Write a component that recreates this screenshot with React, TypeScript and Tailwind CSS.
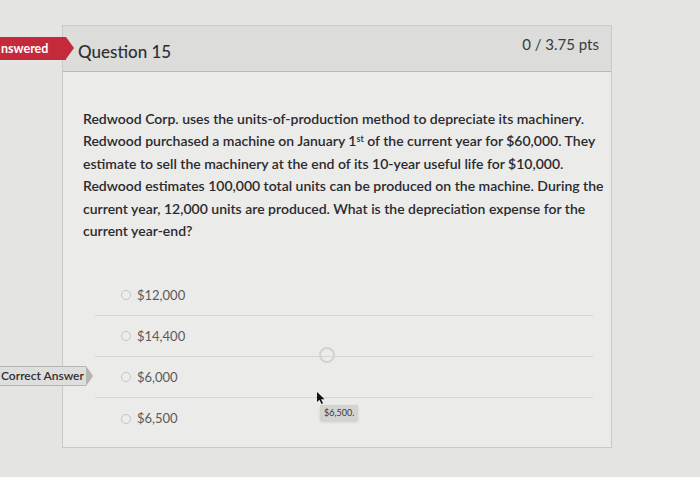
import React from "react";

const answers = ["$12,000", "$14,400", "$6,000", "$6,500"];

function Radio() {
  return (
    <span className="inline-block w-[10px] h-[10px] rounded-full border border-[#c4c4c2] bg-[#ededeb]" />
  );
}

export default function App() {
  return (
    <div
      className="relative w-[700px] h-[477px] overflow-hidden bg-[#e4e4e2]"
      style={{ fontFamily: "Lato, 'Open Sans', sans-serif" }}
    >
      <div className="pt-[25px] pl-[62px]">
        <div className="w-[550px] h-[423px] border border-[#c9c9c7] bg-[#ebebe9]">
          <div className="h-[46px] flex justify-between bg-[#dcdcda] border-b border-[#b9b9b7] pl-[15px] pr-[12px]">
            <div className="pt-[14px] text-[17px] leading-[24px] text-[#2f2f33] font-medium">
              Question 15
            </div>
            <div className="pt-[7px] text-[15px] leading-[22px] text-[#3a3a3e]">
              0 / 3.75 pts
            </div>
          </div>

          <div className="pl-[20px] pt-[36px] text-[14px] leading-[22.4px] font-semibold text-[#2a2a2e] whitespace-nowrap">
            Redwood Corp. uses the units-of-production method to depreciate its machinery.
            <br />
            Redwood purchased a machine on January 1<sup className="text-[9px]">st</sup> of the current year for $60,000. They
            <br />
            estimate to sell the machinery at the end of its 10-year useful life for $10,000.
            <br />
            Redwood estimates 100,000 total units can be produced on the machine. During the
            <br />
            current year, 12,000 units are produced. What is the depreciation expense for the
            <br />
            current year-end?
          </div>

          <div className="mt-[33px] ml-[32px] mr-[18px]">
            {answers.map((a, i) => (
              <div
                key={a}
                className={
                  "h-[41px] flex items-center gap-[6px] pl-[26px] text-[13px] text-[#5a5a5c] " +
                  (i < 3 ? "border-b border-[#d6d6d4]" : "")
                }
              >
                <Radio />
                <span>{a}</span>
              </div>
            ))}
          </div>
        </div>
      </div>

      {/* Answered tag, cut by the left edge */}
      <div className="absolute left-0 top-[37px] h-[23px] flex items-stretch">
        <div className="w-[66px] bg-[#c42a3c] text-white text-[12.5px] font-bold leading-[23px] pl-[1px]">
          nswered
        </div>
        <div className="w-0 h-0 border-y-[11.5px] border-y-transparent border-l-[8px] border-l-[#c42a3c]" />
      </div>

      {/* Correct Answer tag */}
      <div className="absolute left-0 top-[366px] h-[20px] flex items-stretch">
        <div className="w-[86px] bg-[#dededc] border-y border-[#b4b4b2] text-[#2e2e30] text-[12px] font-semibold leading-[18px] pl-[1px]">
          Correct Answer
        </div>
        <div className="w-0 h-0 border-y-[10px] border-y-transparent border-l-[7px] border-l-[#b4b4b2]" />
      </div>

      {/* faint ring */}
      <div className="absolute left-[319px] top-[347px] w-[16px] h-[16px] rounded-full border-2 border-[#d2d2d0]" />

      {/* cursor */}
      <svg className="absolute left-[316px] top-[392px]" width="9" height="13" viewBox="0 0 9 13">
        <path d="M1 0 L1 10 L3.5 7.8 L5.5 12 L7 11.3 L5 7.2 L8.5 7.2 Z" fill="#111" />
      </svg>

      {/* tooltip */}
      <div className="absolute left-[320px] top-[405px] h-[16px] px-[4px] bg-[#d3d3d1] text-[#3a3a3c] text-[9px] leading-[16px] shadow-sm">
        $6,500.
      </div>
    </div>
  );
}
